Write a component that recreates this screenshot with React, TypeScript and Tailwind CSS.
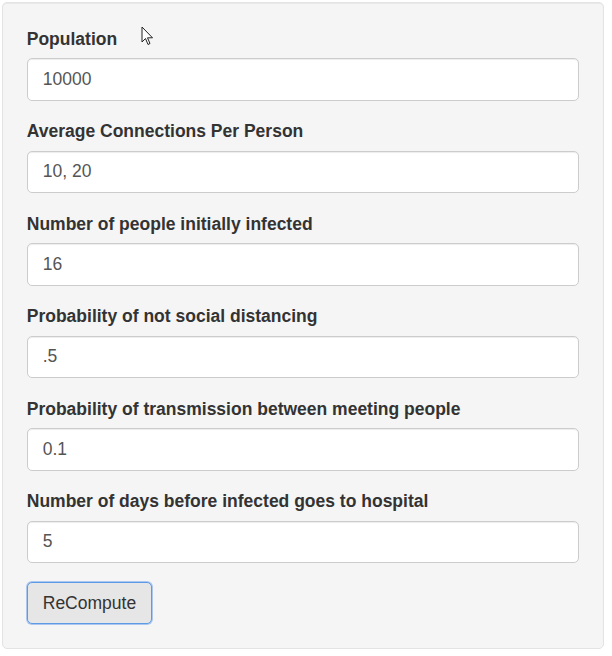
import React from 'react'

const fields = [
    { label: 'Population', value: '10000' },
    { label: 'Average Connections Per Person', value: '10, 20' },
    { label: 'Number of people initially infected', value: '16' },
    { label: 'Probability of not social distancing', value: '.5' },
    { label: 'Probability of transmission between meeting people', value: '0.1' },
    { label: 'Number of days before infected goes to hospital', value: '5' },
]

export default function App() {
    return (
        <div className="bg-white min-h-[656px] pt-[2px] pl-[2px] font-['Liberation_Sans',Arial,sans-serif] text-[#333]">
            <div className="relative w-[602px] bg-[#f5f5f5] border border-[#e3e3e3] rounded-[5px] p-[23.75px] shadow-[inset_0_1px_1px_rgba(0,0,0,0.05)]">
                {fields.map((f) => (
                    <div key={f.label} className="mb-[18.75px]">
                        <label className="block font-bold text-[17.5px] leading-[25px] mb-[6.25px]">{f.label}</label>
                        <input
                            readOnly
                            value={f.value}
                            className="block w-full h-[42.5px] bg-white border border-[#ccc] rounded-[5px] px-[15px] text-[17.5px] text-[#555] outline-none shadow-[inset_0_1px_1px_rgba(0,0,0,0.075)]"
                        />
                    </div>
                ))}
                <button className="h-[42.5px] px-[15px] bg-[#e6e6e6] border border-[#5e9be6] rounded-[5px] text-[17.5px] text-[#333] shadow-[0_0_0_1px_rgba(110,160,235,0.55)]">
                    ReCompute
                </button>

                <svg className="absolute left-[138px] top-[23px]" width="14" height="21" viewBox="0 0 14 21">
                    <path d="M1 1 L1 16 L4.5 12.5 L7 18.5 L9 17.5 L6.5 11.8 L11.5 11.8 Z" fill="white" stroke="#222" strokeWidth="1" strokeLinejoin="round" />
                </svg>
            </div>
        </div>
    )
}
